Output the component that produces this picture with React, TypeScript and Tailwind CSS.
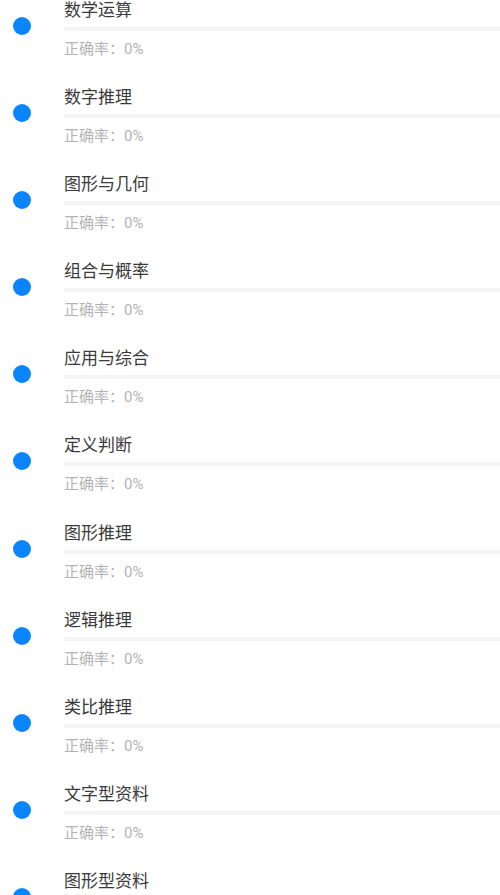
const ITEMS = [
  '数学运算',
  '数字推理',
  '图形与几何',
  '组合与概率',
  '应用与综合',
  '定义判断',
  '图形推理',
  '逻辑推理',
  '类比推理',
  '文字型资料',
  '图形型资料',
];

export default function App() {
  return (
    <div
      className="w-[500px] h-[895px] overflow-hidden bg-white"
      style={{ fontFamily: 'Roboto, "Noto Sans CJK SC", sans-serif' }}
    >
      {ITEMS.map((name) => (
        <div key={name} className="flex items-start h-[87.1px] shrink-0">
          <div className="w-[64px] shrink-0 pl-[13px] pt-[17px]">
            <div className="w-[18px] h-[18px] rounded-full bg-[#0a84ff]" />
          </div>
          <div className="flex-1 min-w-0">
            <div className="text-[17px] leading-[20px] text-[#3a3a3a]">{name}</div>
            <div className="mt-[7px] h-[4px] bg-[#f4f4f4]" />
            <div className="mt-[8px] text-[15px] leading-[20px] text-[#b3b3b3]">正确率：0%</div>
          </div>
        </div>
      ))}
    </div>
  );
}
